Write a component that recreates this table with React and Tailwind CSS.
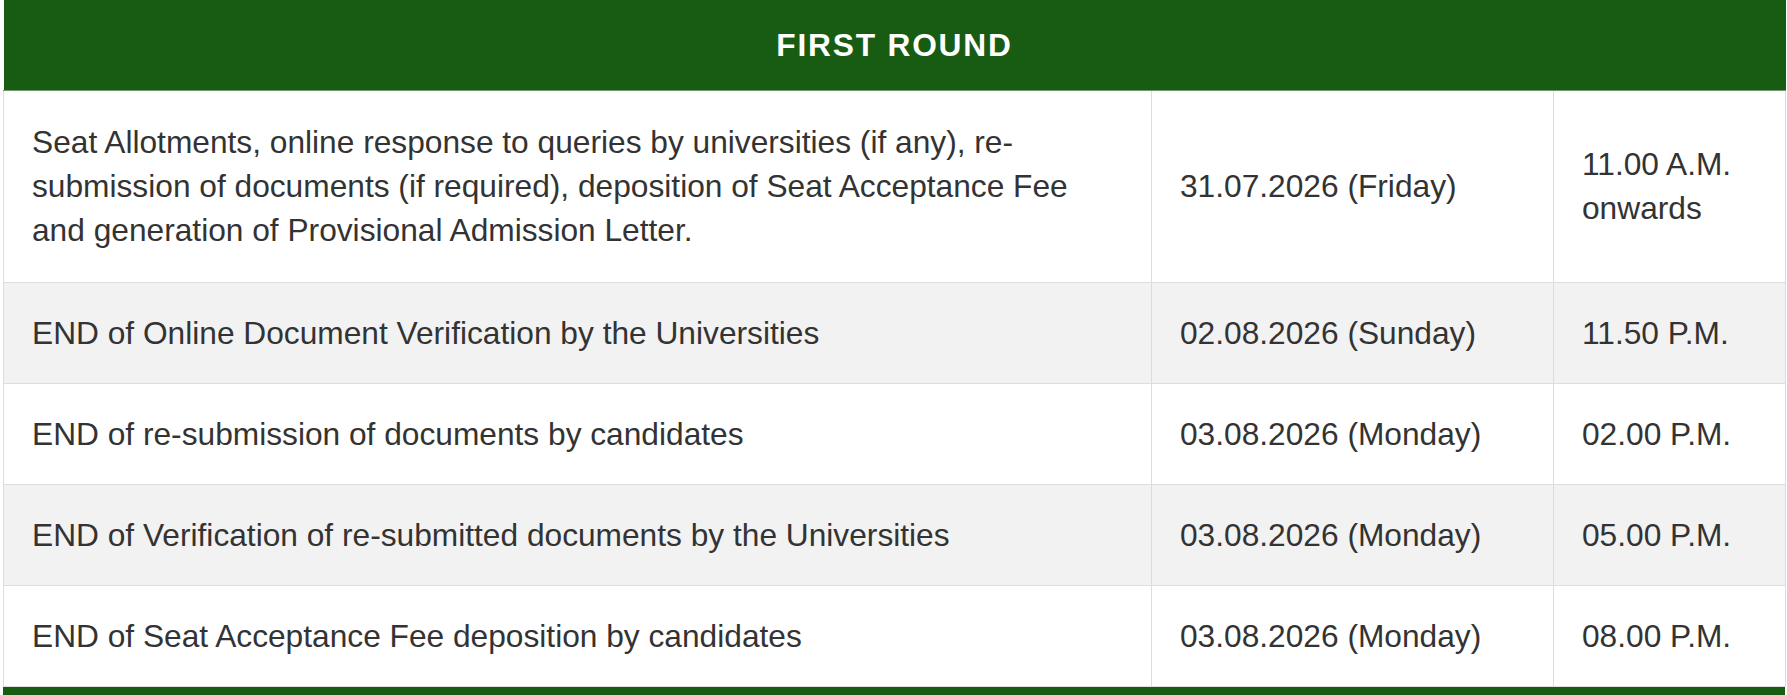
import React from 'react';

const rows = [
  {
    event:
      'Seat Allotments, online response to queries by universities (if any), re-submission of documents (if required), deposition of Seat Acceptance Fee and generation of Provisional Admission Letter.',
    date: '31.07.2026 (Friday)',
    time: '11.00 A.M. onwards',
    tall: true,
  },
  { event: 'END of Online Document Verification by the Universities', date: '02.08.2026 (Sunday)', time: '11.50 P.M.' },
  { event: 'END of re-submission of documents by candidates', date: '03.08.2026 (Monday)', time: '02.00 P.M.' },
  { event: 'END of Verification of re-submitted documents by the Universities', date: '03.08.2026 (Monday)', time: '05.00 P.M.' },
  { event: 'END of Seat Acceptance Fee deposition by candidates', date: '03.08.2026 (Monday)', time: '08.00 P.M.' },
];

const App = () => {
  return (
    <div className="bg-white h-[695px] overflow-hidden font-['Liberation_Sans',Arial,sans-serif] text-[#333333]">
      <table className="ml-[3px] w-[1782px] table-fixed border-collapse text-[31.7px] leading-[44px]">
        <colgroup>
          <col className="w-[1148px]" />
          <col className="w-[402px]" />
          <col className="w-[232px]" />
        </colgroup>
        <thead>
          <tr>
            <th
              colSpan={3}
              className="h-[90px] bg-[#175c12] text-white font-bold tracking-[1.8px] text-center border-b border-[#6f9a6c]"
            >
              FIRST ROUND
            </th>
          </tr>
        </thead>
        <tbody>
          {rows.map((row, i) => (
            <tr key={i} className={`${row.tall ? 'h-[192px]' : 'h-[101px]'} ${i % 2 === 1 ? 'bg-[#f2f2f2]' : 'bg-white'}`}>
              <td className="border border-[#dddddd] pl-[28px] pr-[30px] py-[28px] align-middle text-left font-normal">{row.event}</td>
              <td className="border border-[#dddddd] px-[28px] py-[28px] align-middle text-left">{row.date}</td>
              <td className="border border-[#dddddd] px-[28px] py-[28px] align-middle text-left">{row.time}</td>
            </tr>
          ))}
        </tbody>
      </table>
      <div className="ml-[3px] w-[1782px] h-[20px] bg-[#175c12]"></div>
    </div>
  );
};

export default App;
